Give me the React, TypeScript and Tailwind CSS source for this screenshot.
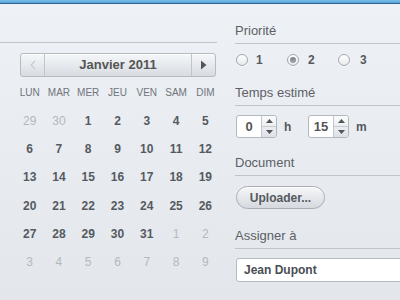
import React from "react";

const F = { fontFamily: '"Liberation Sans", Arial, sans-serif' };

function Radio({ checked }: { checked?: boolean }) {
  return (
    <span className="relative inline-flex h-[12px] w-[12px] items-center justify-center rounded-full border border-[#a3a8af] bg-gradient-to-b from-white to-[#e6e9ed] shadow-[0_1px_0_rgba(255,255,255,0.8)]">
      {checked && <span className="h-[6px] w-[6px] rounded-full bg-gradient-to-b from-[#7d8187] to-[#a3a6ab]" />}
    </span>
  );
}

function Spinner({ value }: { value: string }) {
  return (
    <div className="flex h-[23px] w-[41px] overflow-hidden rounded-[3px] border border-[#b3b8bf] bg-white">
      <div className="flex flex-1 items-center justify-center text-[13px] font-bold text-[#555]">{value}</div>
      <div className="flex w-[15px] flex-col border-l border-[#c3c7cd] bg-gradient-to-b from-[#fafbfc] to-[#dde1e6]">
        <div className="flex flex-1 items-center justify-center border-b border-[#c8ccd2]">
          <svg width="7" height="4" viewBox="0 0 7 4"><path d="M3.5 0L7 4H0z" fill="#555" /></svg>
        </div>
        <div className="flex flex-1 items-center justify-center">
          <svg width="7" height="4" viewBox="0 0 7 4"><path d="M0 0h7L3.5 4z" fill="#555" /></svg>
        </div>
      </div>
    </div>
  );
}

const days = ["LUN", "MAR", "MER", "JEU", "VEN", "SAM", "DIM"];
const cells: { n: number; cur: boolean }[] = [];
[29, 30].forEach((n) => cells.push({ n, cur: false }));
for (let i = 1; i <= 31; i++) cells.push({ n: i, cur: true });
for (let i = 1; i <= 9; i++) cells.push({ n: i, cur: false });

export default function App() {
  return (
    <div style={F} className="h-[300px] w-[400px] overflow-hidden bg-gradient-to-b from-[#eef1f6] to-[#e3e7ec]">
      <div className="h-[4px] border-b border-[#2d6790] bg-gradient-to-b from-[#79bdea] to-[#55a5dc]" />
      <div className="flex">
        {/* Left calendar */}
        <div className="w-[217px] shrink-0">
          <div className="h-[39px] border-b border-[#bfc4cb]" />
          <div className="ml-[20px] mt-[10px] flex h-[24px] w-[196px] rounded-[3px] border border-[#b6bbc2] bg-gradient-to-b from-[#f5f7f9] to-[#d8dce2] shadow-[inset_0_1px_0_rgba(255,255,255,0.9)]">
            <div className="flex w-[24px] items-center justify-center border-r border-[#c0c5cc]">
              <svg width="6" height="10" viewBox="0 0 6 10"><path d="M5 1L1 5l4 4" fill="none" stroke="#c8ccd2" strokeWidth="1.2" /></svg>
            </div>
            <div className="flex flex-1 items-center justify-center text-[13px] font-bold text-[#555]">Janvier 2011</div>
            <div className="flex w-[24px] items-center justify-center border-l border-[#c0c5cc]">
              <svg width="7" height="10" viewBox="0 0 7 10"><path d="M1 0.5L6.5 5 1 9.5z" fill="#555" /></svg>
            </div>
          </div>
          <div className="ml-[15px] mt-[8px] grid w-[205px] grid-cols-7">
            {days.map((d) => (
              <div key={d} className="flex h-[14px] items-center justify-center text-[10px] text-[#6f747a]">{d}</div>
            ))}
          </div>
          <div className="ml-[15px] mt-[8px] grid w-[205px] grid-cols-7">
            {cells.map((c, i) => (
              <div
                key={i}
                className={
                  "flex h-[28.2px] items-center justify-center text-[12px] " +
                  (c.cur ? "font-bold text-[#555a60]" : "text-[#b3b8bd]")
                }
              >
                {c.n}
              </div>
            ))}
          </div>
        </div>

        {/* Right form */}
        <div className="ml-[18px] flex-1 text-[#555a60]">
          <div className="border-b border-[#bfc4cb] pb-[4px] pt-[19px] text-[13px] leading-[16px] text-[#5c6066]">Priorité</div>
          <div className="mt-[10px] flex h-[12px] items-center pl-[1px] text-[12px] font-bold">
            <Radio />
            <span className="ml-[8px] w-[31px]">1</span>
            <Radio checked />
            <span className="ml-[9px] w-[30px]">2</span>
            <Radio />
            <span className="ml-[10px]">3</span>
          </div>
          <div className="mt-[19px] border-b border-[#bfc4cb] pb-[4px] text-[13px] leading-[16px] text-[#5c6066]">Temps estimé</div>
          <div className="mt-[9px] flex items-center pl-[1px] text-[12px] font-bold">
            <Spinner value="0" />
            <span className="ml-[7px] w-[24px]">h</span>
            <Spinner value="15" />
            <span className="ml-[7px]">m</span>
          </div>
          <div className="mt-[17px] border-b border-[#bfc4cb] pb-[4px] text-[13px] leading-[16px] text-[#5c6066]">Document</div>
          <div className="mt-[10px] pl-[1px]">
            <div className="flex h-[23px] w-[89px] items-center justify-center rounded-full border border-[#a9aeb6] bg-gradient-to-b from-[#f6f7f9] to-[#d5d9df] text-[12px] font-bold text-[#555a60] shadow-[inset_0_1px_0_rgba(255,255,255,0.9)]">
              Uploader...
            </div>
          </div>
          <div className="mt-[19px] border-b border-[#bfc4cb] pb-[4px] text-[13px] leading-[16px] text-[#5c6066]">Assigner à</div>
          <div className="ml-[1px] mt-[9px] flex h-[24px] w-[200px] items-center rounded-[3px] border border-[#b6bbc2] bg-white pl-[7px] text-[12px] font-bold text-[#4a4e54]">
            Jean Dupont
          </div>
        </div>
      </div>
    </div>
  );
}
